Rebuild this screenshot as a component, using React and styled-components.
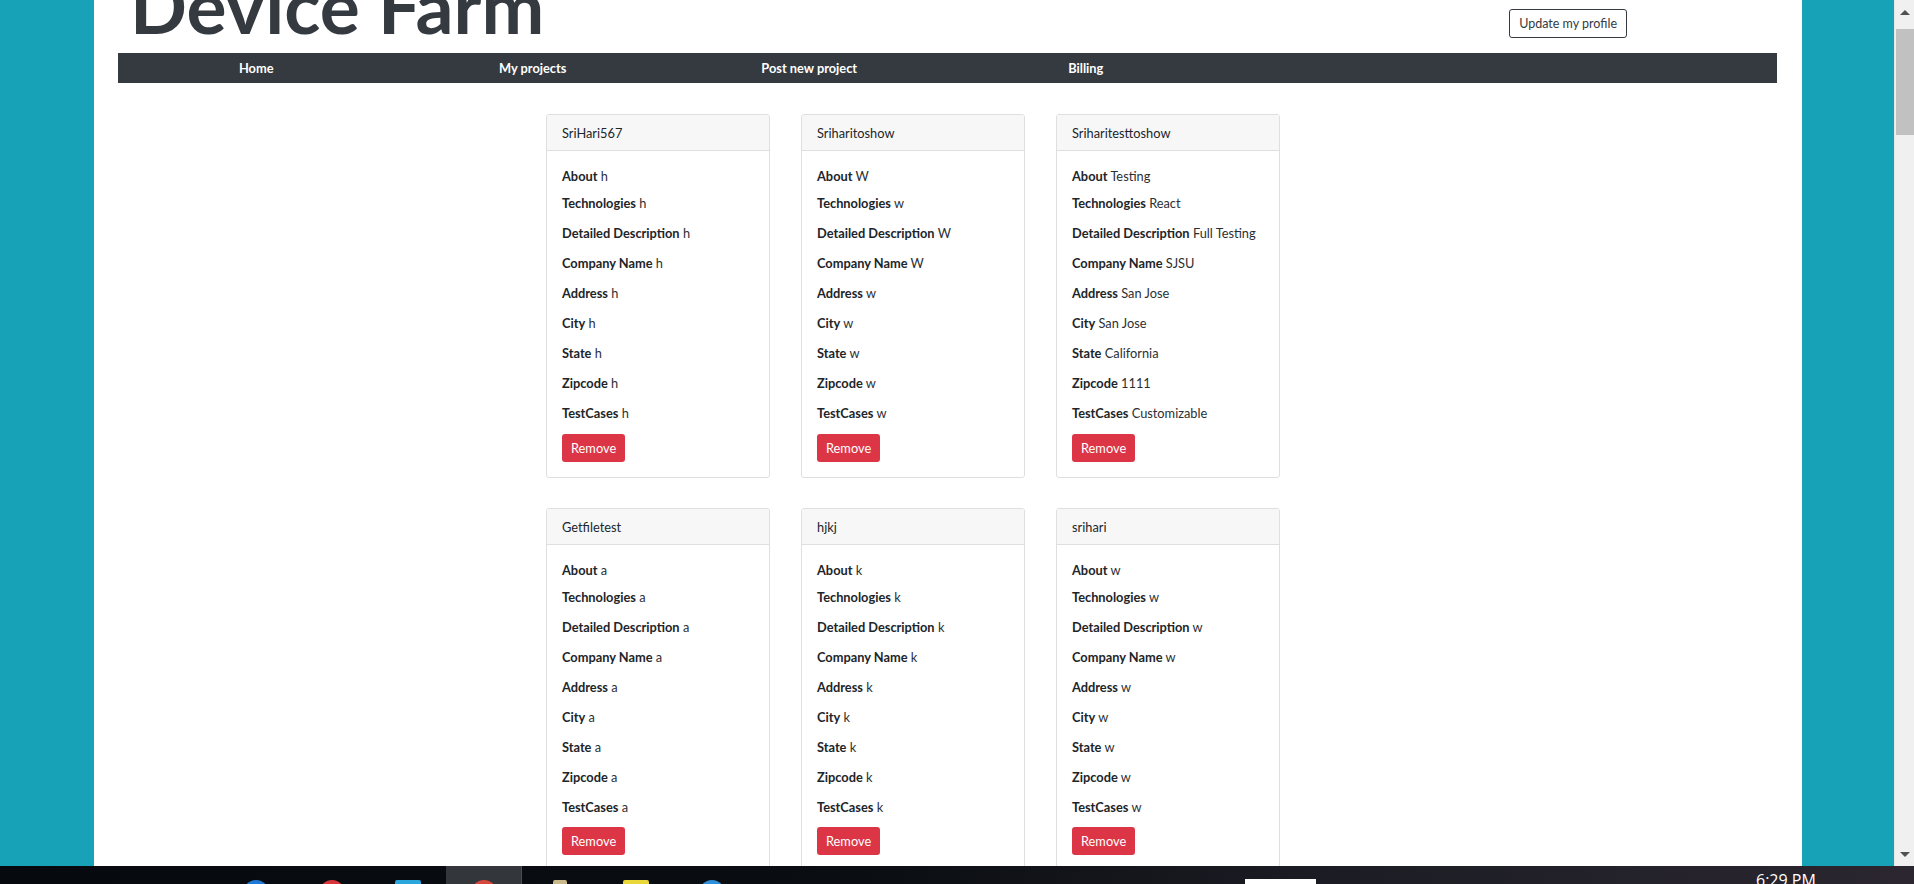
import React from 'react'
import styled, { createGlobalStyle } from 'styled-components'

const GlobalStyle = createGlobalStyle`
  html, body {
    margin: 0;
    padding: 0;
    overflow: hidden;
  }
  body {
    font-family: Lato, "Open Sans", sans-serif;
    color: #212529;
  }
  * {
    box-sizing: border-box;
  }
`

const fields = ['About', 'Technologies', 'Detailed Description', 'Company Name', 'Address', 'City', 'State', 'Zipcode', 'TestCases']

const projects = [
    { name: 'SriHari567', values: ['h', 'h', 'h', 'h', 'h', 'h', 'h', 'h', 'h'] },
    { name: 'Sriharitoshow', values: ['W', 'w', 'W', 'W', 'w', 'w', 'w', 'w', 'w'] },
    { name: 'Sriharitesttoshow', values: ['Testing', 'React', 'Full Testing', 'SJSU', 'San Jose', 'San Jose', 'California', '1111', 'Customizable'] },
    { name: 'Getfiletest', values: ['a', 'a', 'a', 'a', 'a', 'a', 'a', 'a', 'a'] },
    { name: 'hjkj', values: ['k', 'k', 'k', 'k', 'k', 'k', 'k', 'k', 'k'] },
    { name: 'srihari', values: ['w', 'w', 'w', 'w', 'w', 'w', 'w', 'w', 'w'] },
]

const navLinks = ['Home', 'My projects', 'Post new project', 'Billing']

const taskIcons = [
    { color: '#1e7ad6', round: true },
    { color: '#e8e2e2', round: true, ring: '#d8363a' },
    { color: '#2aa6dc' },
    { color: '#d8473b', round: true, active: true },
    { color: '#c9b98a', small: true },
    { color: '#e9d73a' },
    { color: '#2f8fd8', round: true },
]

const ProjectCard = ({ project }) => (
    <Card>
        <CardHeader>{project.name}</CardHeader>
        <CardBody>
            {fields.map((label, i) => (
                <Field key={label} first={i === 0}>
                    <b>{label}</b> {project.values[i]}
                </Field>
            ))}
            <RemoveButton type='button'>Remove</RemoveButton>
        </CardBody>
    </Card>
)

const App = () => {
    return (
        <Screen>
            <GlobalStyle />
            <Browser>
                <Viewport>
                    <Container>
                        <Masthead>
                            <Title>Device Farm</Title>
                            <ProfileButton type='button'>Update my profile</ProfileButton>
                        </Masthead>
                        <NavBar>
                            {navLinks.map((link) => (
                                <NavLink key={link} href='#'>{link}</NavLink>
                            ))}
                        </NavBar>
                        <Projects>
                            {projects.map((p) => (
                                <ProjectCard key={p.name} project={p} />
                            ))}
                        </Projects>
                    </Container>
                </Viewport>
                <Scrollbar>
                    <ScrollArrow up />
                    <ScrollThumb />
                    <ScrollArrow />
                </Scrollbar>
            </Browser>
            <Taskbar>
                <TaskIcons>
                    {taskIcons.map((icon, i) => (
                        <TaskSlot key={i} active={icon.active}>
                            <TaskIcon color={icon.color} round={icon.round} ring={icon.ring} small={icon.small} />
                        </TaskSlot>
                    ))}
                </TaskIcons>
                <SearchBox />
                <Clock>6:29 PM</Clock>
            </Taskbar>
        </Screen>
    )
}

const Screen = styled.div`
    width: 1914px;
    height: 884px;
    display: flex;
    flex-direction: column;
    overflow: hidden;
`

const Browser = styled.div`
    height: 866px;
    display: flex;
    overflow: hidden;
`

const Viewport = styled.div`
    flex: 1;
    background-color: #17a2b8;
    overflow: hidden;
`

const Container = styled.div`
    margin: 0 92px 0 94px;
    min-height: 100%;
    background-color: #fff;
    padding: 0 25px 40px 24px;
`

const Masthead = styled.div`
    height: 53px;
    display: flex;
    align-items: flex-start;
`

const Title = styled.h1`
    margin: -32px 0 0 12px;
    font-size: 75px;
    line-height: 1;
    font-weight: 700;
    color: #343a40;
    white-space: nowrap;
`

const ProfileButton = styled.button`
    margin: 9px 150px 0 auto;
    height: 29px;
    padding: 0 9px;
    border: 1px solid #343a40;
    border-radius: 3px;
    background-color: #fff;
    color: #343a40;
    font-family: inherit;
    font-size: 12.5px;
    cursor: pointer;
`

const NavBar = styled.nav`
    height: 30px;
    display: grid;
    grid-template-columns: repeat(6, 1fr);
    background-color: #343a40;
`

const NavLink = styled.a`
    color: #fff;
    text-decoration: none;
    text-align: center;
    font-weight: 700;
    font-size: 12.8px;
    line-height: 30px;
`

const Projects = styled.div`
    display: grid;
    grid-template-columns: repeat(3, 224px);
    column-gap: 31px;
    row-gap: 30px;
    padding: 31px 0 0 428px;
`

const Card = styled.div`
    border: 1px solid #dfdfdf;
    border-radius: 3px;
    background-color: #fff;
    overflow: hidden;
`

const CardHeader = styled.div`
    height: 36px;
    padding: 0 15px;
    background-color: #f7f7f7;
    border-bottom: 1px solid #dfdfdf;
    font-size: 12.8px;
    line-height: 37px;
`

const CardBody = styled.div`
    padding: 16px 15px 15px;
`

const Field = styled.p`
    margin: 0 0 ${(props) => (props.first ? '8px' : '11px')};
    font-size: 12.8px;
    line-height: 19px;
    color: #2b2f33;

    b {
        font-weight: 700;
        color: #212529;
    }

    &:nth-last-of-type(1) {
        margin-bottom: 10.5px;
    }
`

const RemoveButton = styled.button`
    height: 28px;
    padding: 0 9px;
    border: none;
    border-radius: 3px;
    background-color: #dc3545;
    color: #fff;
    font-family: inherit;
    font-size: 12.8px;
    cursor: pointer;
`

const Scrollbar = styled.div`
    width: 20px;
    display: flex;
    flex-direction: column;
    background-color: #f0f0f0;
    border-left: 1px solid #e6e6e6;
`

const ScrollArrow = styled.div`
    height: 24px;
    margin-top: ${(props) => (props.up ? '0' : 'auto')};
    display: flex;
    align-items: center;
    justify-content: center;

    &::after {
        content: '';
        border-left: 5px solid transparent;
        border-right: 5px solid transparent;
        ${(props) => (props.up ? 'border-bottom: 5px solid #505050;' : 'border-top: 5px solid #505050;')}
    }
`

const ScrollThumb = styled.div`
    height: 106px;
    margin: 5px 0 0 1px;
    background-color: #c1c1c1;
`

const Taskbar = styled.div`
    height: 18px;
    display: flex;
    align-items: flex-start;
    background: linear-gradient(90deg, #06090d 0%, #0a0d12 45%, #1c1d24 70%, #2b2630 100%);
    overflow: hidden;
`

const TaskIcons = styled.div`
    display: flex;
    margin-left: 218px;
`

const TaskSlot = styled.div`
    width: 76px;
    height: 40px;
    display: flex;
    justify-content: center;
    padding-top: 14px;
    background-color: ${(props) => (props.active ? '#33363b' : 'transparent')};
    border-right: ${(props) => (props.active ? '1px solid #4a4d52' : 'none')};
`

const TaskIcon = styled.div`
    width: ${(props) => (props.small ? '14px' : '26px')};
    height: 26px;
    border-radius: ${(props) => (props.round ? '50%' : '2px')};
    background-color: ${(props) => props.color};
    border: ${(props) => (props.ring ? `4px solid ${props.ring}` : 'none')};
`

const SearchBox = styled.div`
    width: 71px;
    height: 20px;
    margin: 13px 0 0 495px;
    background-color: #fff;
`

const Clock = styled.div`
    margin: 4px 0 0 440px;
    color: #fff;
    font-family: "Open Sans", sans-serif;
    font-size: 16px;
    line-height: 20px;
`

export default App
